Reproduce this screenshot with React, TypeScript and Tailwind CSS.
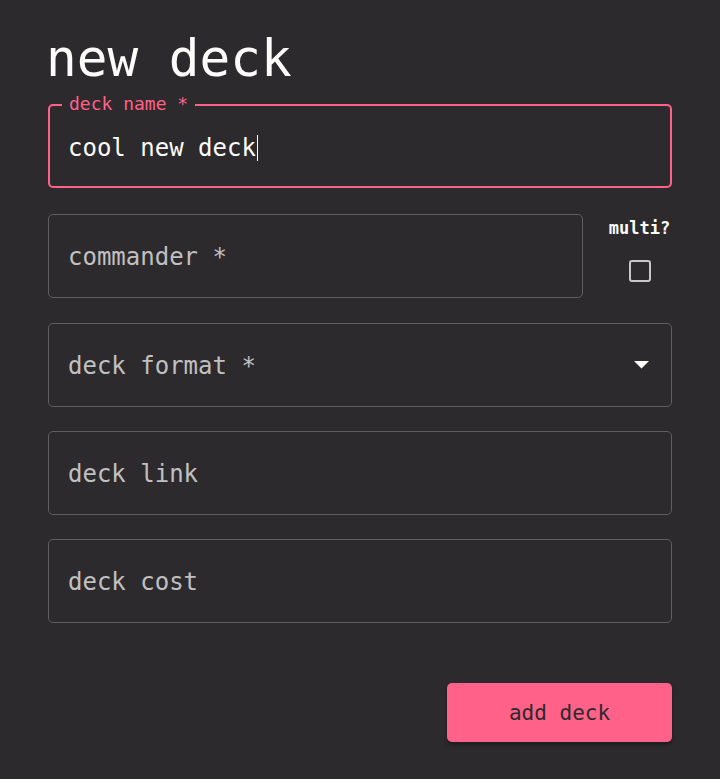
import React from 'react';

const mono = { fontFamily: '"DejaVu Sans Mono", "Liberation Mono", monospace' };

function Field({ label, className = '', children }: { label: string; className?: string; children?: React.ReactNode }) {
  return (
    <div
      className={`flex h-[84px] items-center rounded-[5px] border border-[#5f5d60] pl-[19px] pr-[21px] ${className}`}
    >
      <span className="flex-1 pt-[1px] text-[24px] leading-[32px] text-[#c1c0c0]">{label}</span>
      {children}
    </div>
  );
}

export default function App() {
  return (
    <div className="min-h-[779px] bg-[#2d2a2e] px-12 pt-[29px]" style={mono}>
      <h1 className="mb-[15px] ml-[-2px] text-[51px] leading-[60px] text-[#fcfcfa]">new deck</h1>

      <div className="relative flex h-[84px] items-center rounded-[5px] border-2 border-[#ff6188] pl-[18px] pt-[4px]">
        <span className="absolute left-[12px] top-[-13px] bg-[#2d2a2e] px-[7px] text-[18px] leading-[22px] text-[#ff6188]">
          deck name *
        </span>
        <span className="text-[24px] leading-[32px] text-[#fcfcfa]">cool new deck</span>
        <span className="ml-[1px] h-[26px] w-[1px] bg-[#fcfcfa]" />
      </div>

      <div className="mt-[26px] flex gap-[24px]">
        <Field label="commander *" className="flex-1" />
        <div className="flex w-[65px] flex-col items-center pt-[2px]">
          <span className="text-[17px] font-bold leading-[24px] text-[#fcfcfa]">multi?</span>
          <div className="mt-[20px] h-[22px] w-[22px] rounded-[3px] border-2 border-[#c8c7c8]" />
        </div>
      </div>

      <Field label="deck format *" className="mt-[25px]">
        <svg width="15" height="8" viewBox="0 0 15 8" className="mr-[1px]">
          <path d="M0 0 L15 0 L7.5 7.5 Z" fill="#fcfcfa" />
        </svg>
      </Field>

      <Field label="deck link" className="mt-[24px]" />
      <Field label="deck cost" className="mt-[24px]" />

      <div className="mt-[60px] flex justify-end">
        <button className="h-[59px] w-[225px] rounded-[5px] bg-[#ff6188] pt-[3px] text-[21px] text-[#2d2a2e] shadow-[0_3px_4px_rgba(0,0,0,0.35)]">
          add deck
        </button>
      </div>
    </div>
  );
}
